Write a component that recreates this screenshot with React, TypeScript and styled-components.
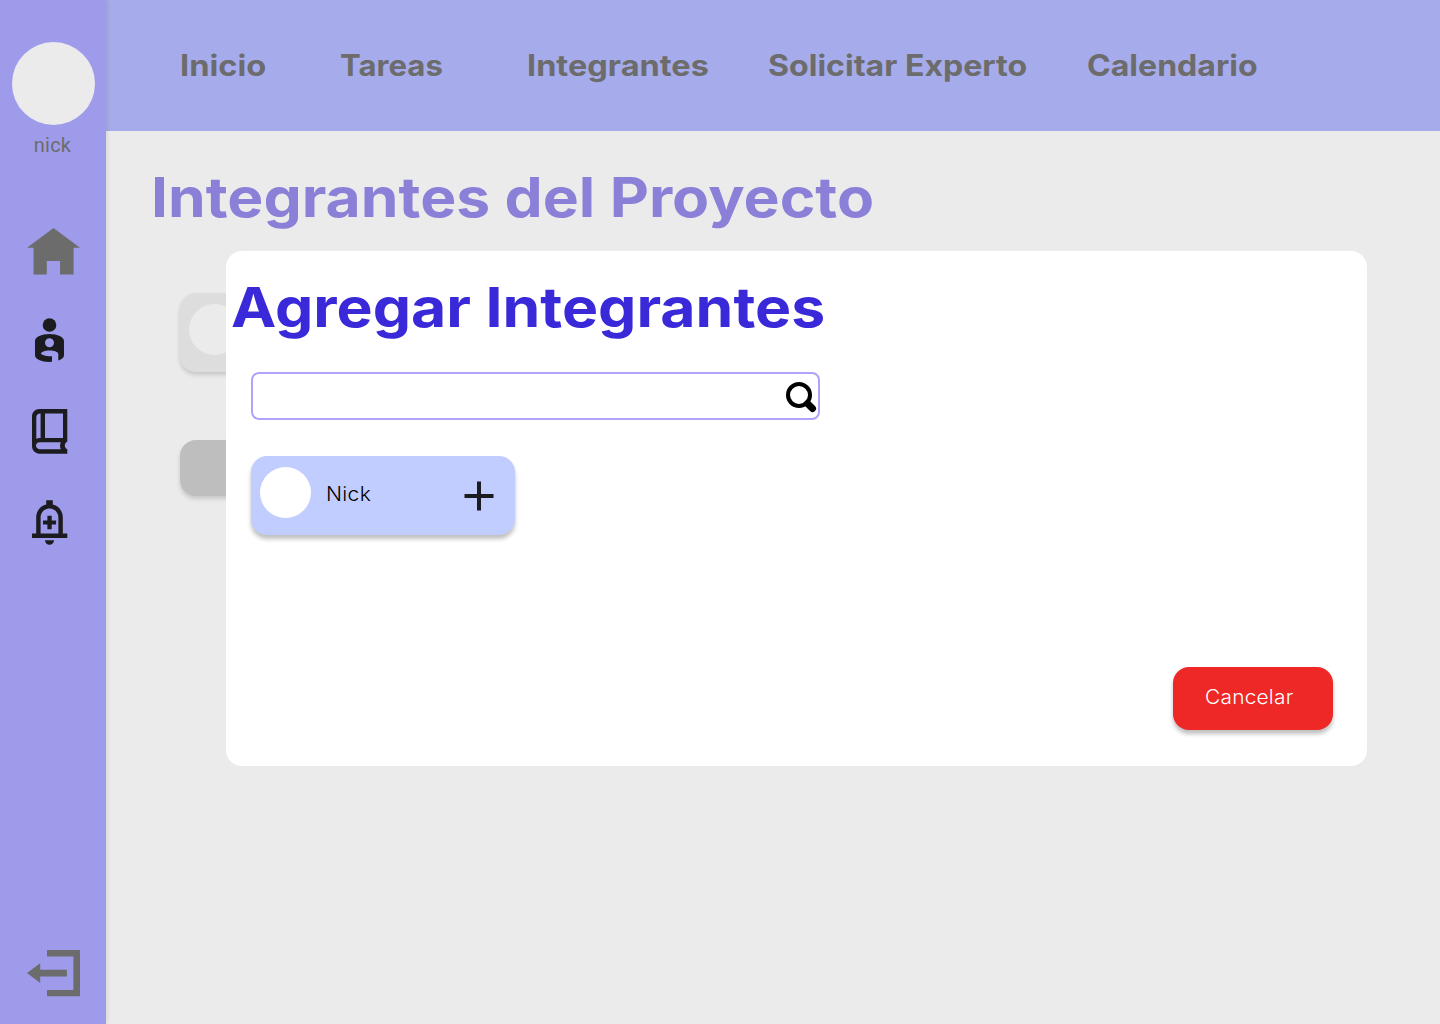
import React from "react";
import styled, { createGlobalStyle } from "styled-components";

const Global = createGlobalStyle`
  * { box-sizing: border-box; }
  body { margin: 0; background: #ebebeb; font-family: Inter, "Open Sans", sans-serif; }
  h1, h2, p { margin: 0; }
`;

const Page = styled.div`
  display: flex;
  width: 1440px;
  height: 1024px;
  overflow: hidden;
  background: #ebebeb;
`;

const Sidebar = styled.aside`
  position: relative;
  z-index: 1;
  flex: none;
  width: 106px;
  padding: 42px 0 27px;
  display: flex;
  flex-direction: column;
  align-items: center;
  background: #9e9beb;
  box-shadow: 1px 0 4px rgba(0, 0, 0, 0.1);
`;

const Avatar = styled.div<{ $size: number; $color: string }>`
  flex: none;
  width: ${(p) => p.$size}px;
  height: ${(p) => p.$size}px;
  border-radius: 50%;
  background: ${(p) => p.$color};
`;

const UserName = styled.p`
  margin: 8px 1px 0 0;
  font: 400 20px/24px Roboto, sans-serif;
  letter-spacing: 0.2px;
  color: #6c6c6c;
`;

const Menu = styled.nav`
  margin-top: 71px;
  flex: 1;
  width: 100%;
  display: flex;
  flex-direction: column;
`;

const IconSlot = styled.a<{ $left: number; $before: number; $end?: boolean }>`
  display: block;
  line-height: 0;
  margin-left: ${(p) => p.$left}px;
  margin-top: ${(p) => (p.$end ? "auto" : `${p.$before}px`)};
`;

const Main = styled.main`
  flex: 1;
  display: flex;
  flex-direction: column;
`;

const TopBar = styled.nav`
  height: 131px;
  flex: none;
  padding: 0 0 2px 74px;
  display: grid;
  grid-template-columns: 160px 187px 241px 319px auto;
  align-items: center;
  background: #a6abeb;
`;

const NavLink = styled.a<{ $stretch: number }>`
  justify-self: start;
  font-size: 29.5px;
  line-height: 36px;
  font-weight: 700;
  white-space: nowrap;
  transform: scaleX(${(p) => p.$stretch});
  transform-origin: left;
  color: #6c6c6c;
`;

const Content = styled.section`
  position: relative;
  flex: 1;
  padding: 32px 0 0 45px;
`;

const Title = styled.h1<{ $color: string; $stretch: number }>`
  font-size: 55px;
  line-height: 68px;
  font-weight: 700;
  white-space: nowrap;
  transform: scaleX(${(p) => p.$stretch});
  transform-origin: left;
  color: ${(p) => p.$color};
`;

const Card = styled.div<{ $bg: string }>`
  width: 264px;
  height: 79px;
  padding: 11px 21px 0 9px;
  display: flex;
  align-items: flex-start;
  border-radius: 16px;
  background: ${(p) => p.$bg};
  box-shadow: 0 4px 4px rgba(0, 0, 0, 0.25);
`;

const Behind = styled.div`
  margin: 62px 0 0 29px;
  display: flex;
  flex-direction: column;
  gap: 68px;
  ${Card} { box-shadow: 0 3px 4px rgba(0, 0, 0, 0.15); }
`;

const MutedButton = styled.div`
  width: 160px;
  height: 56px;
  border-radius: 16px;
  background: #bebebe;
  box-shadow: 0 3px 4px rgba(0, 0, 0, 0.15);
`;

const Modal = styled.div`
  position: absolute;
  left: 120px;
  top: 120px;
  width: 1141px;
  height: 515px;
  padding: 22px 34px 36px 25px;
  display: flex;
  flex-direction: column;
  align-items: flex-start;
  border-radius: 16px;
  background: #fff;
  ${Title} { margin-left: -20px; }
`;

const Search = styled.label`
  width: 569px;
  height: 48px;
  margin: 31px 0 36px;
  padding-top: 2px;
  display: flex;
  align-items: center;
  border: 2px solid #aea4fa;
  border-radius: 8px;
`;

const SearchInput = styled.input`
  flex: 1;
  border: 0;
  outline: 0;
  background: transparent;
  font: 400 20px Inter, sans-serif;
`;

const MemberName = styled.p`
  flex: 1;
  margin: 15px 0 0 15px;
  font-size: 19.5px;
  line-height: 24px;
  font-weight: 300;
  letter-spacing: 0.3px;
  transform: scaleX(1.08);
  transform-origin: left;
  color: #000;
`;

const AddButton = styled.span`
  margin-top: 14px;
  line-height: 0;
`;

const CancelButton = styled.button`
  width: 160px;
  height: 63px;
  margin: auto 0 0 auto;
  padding: 0 7px 3px 0;
  border: 0;
  border-radius: 16px;
  background: #ee2727;
  box-shadow: 0 4px 4px rgba(0, 0, 0, 0.25);
  color: #fff;
  font: 300 19.5px/24px Inter, sans-serif;
`;

const CancelLabel = styled.span`
  display: inline-block;
  letter-spacing: 0.2px;
  transform: scaleX(1.07);
`;

const HomeIcon = () => (
  <svg width="53" height="47" viewBox="27 228 53 47" fill="#6c6c6c">
    <path d="M53.5 228 80 247.8h-6.4v26.6H60.1V261H46.8v13.4H33.5v-26.6H27z" />
  </svg>
);

const PersonIcon = () => (
  <svg width="30" height="45" viewBox="35 318 30 45" fill="#1c1b1f">
    <circle cx="49.5" cy="325" r="6.8" />
    <path
      fillRule="evenodd"
      d="M35 341c0-4 6.500-7 14.500-7s14.500 3 14.500 7v14.500c0 2-2.200 3.800-5.700 5.100v-6.400c0-2.200-4-3.600-8.800-3.600s-8.500 1.500-8.500 3.400c2.200 1.600 6 2.300 11 2.300v5.500c-9.500.6-17-2.200-17-6.600zM49.500 338.200a4.500 4.500 0 1 0 0 9 4.500 4.500 0 0 0 0-9z"
    />
  </svg>
);

const BookIcon = () => (
  <svg width="36" height="45" viewBox="32 409 36 45" fill="#1c1b1f">
    <path
      fillRule="evenodd"
      d="M39.500 409H67.300v32.700c-1.600.5-2.500 2-2.500 3.800s.9 3.200 2.500 3.800v4.400H39.500c-4.300 0-7.500-3.200-7.500-7.600v-29.500c0-4.400 3.200-7.600 7.500-7.600zM45 413.500V438h18v-24.500zM40.600 413.600c-2.700.2-4.300 1.400-4.300 4v21.200c1.200-.5 2.500-.8 4.300-.8zM39.600 442.200c-2.100 0-3.600 1.300-3.600 3.400s1.500 3.600 3.600 3.600h21.200c-1-2.100-1-4.900 0-7z"
    />
  </svg>
);

const BellIcon = () => (
  <svg width="36" height="45" viewBox="32 500 36 45" fill="#1c1b1f">
    <path d="M46.200 500.200h6.600v4.400c6 1.400 10 6.400 10 12.800v16.200h4.500v4.400H32v-4.400h4.200v-16.200c0-6.400 4-11.400 10-12.800zM49.500 508.500c-5 0-8.900 4-8.900 8.900v16.200h17.800v-16.200c0-4.900-3.900-8.900-8.900-8.900z" fillRule="evenodd" />
    <path d="M47.400 515.800h4.300v4.600h4.400v4.200h-4.400v4.600h-4.300v-4.600H43v-4.200h4.400zM45 540.200h9c0 2.600-2 4.500-4.500 4.500s-4.500-1.900-4.500-4.500z" />
  </svg>
);

const ExitIcon = () => (
  <svg width="53" height="47" viewBox="27 950 53 47" fill="#6c6c6c">
    <path d="M47 950h33v46.300H47v-6.400h26.400v-33.300H47zM27 973l13.200-9.800v6.500h26.700v6.700H40.200v6.600z" />
  </svg>
);

const SearchIcon = () => (
  <svg width="32" height="32" viewBox="786 381 32 32" fill="none" stroke="#000">
    <circle cx="799" cy="395" r="11" strokeWidth="4" />
    <path d="m807.500 403.500 5 5" strokeWidth="7" strokeLinecap="round" />
  </svg>
);

const PlusIcon = () => (
  <svg width="30" height="30" viewBox="0 0 30 30" fill="#1c1b1f">
    <path d="M13 .5h4V13h12.500v4H17v12.500h-4V17H.5v-4H13z" />
  </svg>
);

const links = [
  { label: "Inicio", stretch: 1.105 },
  { label: "Tareas", stretch: 1.055 },
  { label: "Integrantes", stretch: 1.102 },
  { label: "Solicitar Experto", stretch: 1.088 },
  { label: "Calendario", stretch: 1.087 },
];

export default function App() {
  return (
    <>
      <Global />
      <Page>
        <Sidebar>
          <Avatar $size={83} $color="#ebebeb" />
          <UserName>nick</UserName>
          <Menu>
            <IconSlot $left={27} $before={0}><HomeIcon /></IconSlot>
            <IconSlot $left={35} $before={43}><PersonIcon /></IconSlot>
            <IconSlot $left={32} $before={46}><BookIcon /></IconSlot>
            <IconSlot $left={32} $before={46}><BellIcon /></IconSlot>
            <IconSlot $left={27} $before={0} $end><ExitIcon /></IconSlot>
          </Menu>
        </Sidebar>
        <Main>
          <TopBar>
            {links.map((l) => (
              <NavLink key={l.label} $stretch={l.stretch}>{l.label}</NavLink>
            ))}
          </TopBar>
          <Content>
            <Title $color="#8a80d8" $stretch={1.102}>Integrantes del Proyecto</Title>
            <Behind>
              <Card $bg="#dddddd"><Avatar $size={51} $color="#ebebeb" /></Card>
              <MutedButton />
            </Behind>
            <Modal>
              <Title as="h2" $color="#3a29d8" $stretch={1.104}>Agregar Integrantes</Title>
              <Search>
                <SearchInput aria-label="Buscar" />
                <SearchIcon />
              </Search>
              <Card $bg="#c2cdff">
                <Avatar $size={51} $color="#fff" />
                <MemberName>Nick</MemberName>
                <AddButton><PlusIcon /></AddButton>
              </Card>
              <CancelButton><CancelLabel>Cancelar</CancelLabel></CancelButton>
            </Modal>
          </Content>
        </Main>
      </Page>
    </>
  );
}
